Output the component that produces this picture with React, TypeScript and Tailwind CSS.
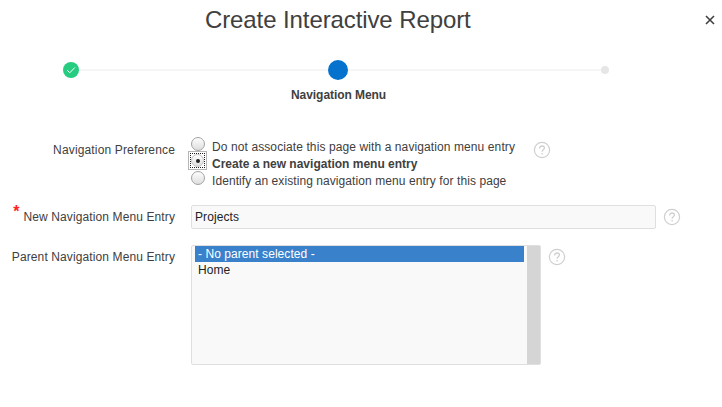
import React from "react";

function Help({ className = "" }: { className?: string }) {
  return (
    <svg className={`h-[18px] w-[18px] shrink-0 ${className}`} viewBox="0 0 18 18" fill="none" stroke="#cfcfcf">
      <circle cx="9" cy="9" r="7.6" strokeWidth="1.2" />
      <path d="M6.6 7.4C6.6 5.8 7.6 5 9 5s2.4.8 2.4 2.1c0 1.6-2.3 1.7-2.3 3.6M9.1 12v1.4" strokeWidth="1.3" />
    </svg>
  );
}

function Radio() {
  return (
    <span className="block h-[14px] w-[14px] shrink-0 rounded-full border border-[#a3a3a3] bg-linear-to-b from-[#fdfdfd] to-[#dedede]" />
  );
}

export default function App() {
  return (
    <main className="h-[407px] w-[722px] overflow-hidden bg-white font-['Liberation_Sans',Arial,sans-serif] text-[12px] leading-[16px] whitespace-nowrap text-[#404040]">
      <header className="flex h-[40px] items-center pl-[205px]">
        <h1 className="flex-1 text-[24px] leading-[40px] tracking-[-0.1px]">Create Interactive Report</h1>
        <svg className="mr-[7px] h-[10px] w-[10px]" viewBox="0 0 10 10" stroke="#404040" strokeWidth="1.6">
          <path d="M1 1l8 8M9 1L1 9" />
        </svg>
      </header>

      <div className="mt-[20px] flex h-[20px] items-center pl-[63px]">
        <span className="flex h-4 w-4 items-center justify-center rounded-full bg-[#26cc80]">
          <svg className="h-4 w-4" viewBox="0 0 16 16" fill="none" stroke="white" strokeWidth="1">
            <path d="M4.2 8.2l2.6 2.6 5-5.3" />
          </svg>
        </span>
        <span className="h-[2px] w-[249px] bg-[#f6f6f6]" />
        <span className="h-5 w-5 rounded-full bg-[#0572ce]" />
        <span className="h-[2px] w-[253px] bg-[#f6f6f6]" />
        <span className="h-2 w-2 rounded-full bg-[#e6e6e6]" />
      </div>
      <div className="mt-[7px] h-[16px] pl-[291px] font-bold tracking-[-0.06px]">Navigation Menu</div>

      <section className="mt-[33px] flex h-[54px]">
        <div className="w-[175px] pt-[6px] text-right tracking-[0.15px]">Navigation Preference</div>
        <div className="ml-[13px] flex w-[19px] flex-col items-center">
          <span className="pt-[1px]"><Radio /></span>
          <span className="flex h-[19px] w-[19px] shrink-0 items-center justify-center border border-[#b5b5b5]">
            <span className="flex h-[15px] w-[15px] items-center justify-center border border-dotted border-[#222]">
              <span className="flex h-[13px] w-[13px] items-center justify-center rounded-full border border-[#c4c4c4] bg-linear-to-b from-[#fdfdfd] to-[#dedede]">
                <span className="h-[4px] w-[4px] rounded-full bg-[#222]" />
              </span>
            </span>
          </span>
          <span className="pt-px"><Radio /></span>
        </div>
        <div className="ml-[5px] w-[321px] pt-[3px] leading-[17px]">
          <div className="tracking-[0.1px]">Do not associate this page with a navigation menu entry</div>
          <div className="font-bold">Create a new navigation menu entry</div>
          <div className="tracking-[0.075px]">Identify an existing navigation menu entry for this page</div>
        </div>
        <Help className="mt-[5px]" />
      </section>

      <section className="mt-[15px] flex h-[24px] items-center">
        <div className="flex w-[175px] items-center justify-end">
          <span className="mr-[4px] mb-[10px] text-[16px] leading-[14px] font-bold text-[#f22]">*</span>
          <span className="tracking-[0.11px]">New Navigation Menu Entry</span>
        </div>
        <div className="ml-[16px] flex h-[24px] w-[465px] items-center rounded-[2px] border border-[#dfdfdf] bg-[#f9f9f9] pl-[3px] tracking-[0.1px] text-[#222]">Projects</div>
        <Help className="ml-[7px]" />
      </section>

      <section className="mt-[16px] flex h-[120px]">
        <div className="w-[175px] pt-[4px] text-right tracking-[0.11px]">Parent Navigation Menu Entry</div>
        <div className="ml-[16px] flex h-[120px] w-[350px] rounded-[2px] border border-[#dfdfdf] bg-[#f9f9f9]">
          <div className="ml-[3px] w-[329px] tracking-[0.06px] text-[#222]">
            <div className="bg-[#3a81cc] pl-[3px] text-white">- No parent selected -</div>
            <div className="pl-[3px]">Home</div>
          </div>
          <div className="ml-auto w-[13px] bg-[#d5d5d5]" />
        </div>
        <Help className="mt-[3px] ml-[7px]" />
      </section>
    </main>
  );
}
